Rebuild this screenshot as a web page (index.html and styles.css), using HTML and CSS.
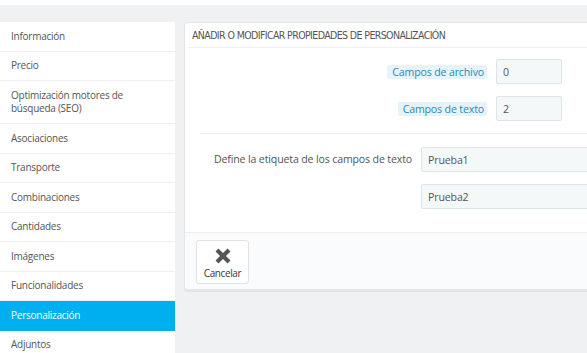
FILE: index.html
```html
<!DOCTYPE html>
<html lang="es">
<head>
  <meta charset="UTF-8">
  <meta name="viewport" content="width=device-width, initial-scale=1.0">
  <title>Personalización</title>
  <link rel="stylesheet" href="styles.css">
</head>
<body>
  <div class="topbar"></div>
  <div class="page">
    <nav class="tabs">
      <a class="tab">Información</a>
      <a class="tab">Precio</a>
      <a class="tab">Optimización motores de búsqueda (SEO)</a>
      <a class="tab">Asociaciones</a>
      <a class="tab">Transporte</a>
      <a class="tab">Combinaciones</a>
      <a class="tab">Cantidades</a>
      <a class="tab">Imágenes</a>
      <a class="tab">Funcionalidades</a>
      <a class="tab active">Personalización</a>
      <a class="tab">Adjuntos</a>
    </nav>

    <section class="panel">
      <h3 class="panel-heading">Añadir o modificar propiedades de personalización</h3>

      <div class="form-group">
        <div class="label-col"><span class="label-tip">Campos de archivo</span></div>
        <input class="field small" type="text" value="0">
      </div>
      <div class="form-group">
        <div class="label-col"><span class="label-tip">Campos de texto</span></div>
        <input class="field small" type="text" value="2">
      </div>

      <hr class="sep">

      <div class="form-group labels">
        <div class="label-col wide">Define la etiqueta de los campos de texto</div>
        <div class="stack">
          <input class="field" type="text" value="Prueba1">
          <input class="field" type="text" value="Prueba2">
        </div>
      </div>

      <div class="panel-footer">
        <button class="btn-cancel" type="button">
          <svg width="16" height="16" viewBox="0 0 16 16">
            <path d="M2 2 L14 14 M14 2 L2 14" stroke="#555" stroke-width="4.2" stroke-linecap="butt"/>
          </svg>
          <span>Cancelar</span>
        </button>
      </div>
    </section>
  </div>
</body>
</html>
```

FILE: styles.css
```css
* {
  margin: 0;
  padding: 0;
  box-sizing: border-box;
}

body {
  font-family: "Open Sans", "DejaVu Sans", sans-serif;
  font-size: 10.6px;
  letter-spacing: -0.15px;
  color: #555;
  background-color: #eff1f2;
  width: 587px;
  height: 353px;
  overflow: hidden;
}

.topbar {
  height: 5px;
  background-color: #fff;
}

.page {
  display: flex;
  align-items: flex-start;
  gap: 9px;
  padding-top: 17px;
}

/* left tabs */
.tabs {
  width: 175px;
  flex-shrink: 0;
  display: flex;
  flex-direction: column;
  background-color: #fff;
}

.tab {
  display: block;
  padding: 7.5px 11px;
  font-size: 10px;
  letter-spacing: -0.25px;
  line-height: 13.5px;
  border-bottom: 1px solid #eee;
  color: #555;
}

.tab.active {
  background-color: #00aff0;
  color: #fff;
  border-bottom-color: #00aff0;
}

/* main panel */
.panel {
  width: 520px;
  flex-shrink: 0;
  background-color: #fff;
  border: 1px solid #e6e6e6;
  border-radius: 4px;
  box-shadow: 0 2px 0 rgba(0, 0, 0, 0.05);
}

.panel-heading {
  margin: 0 3px;
  padding: 0 4px;
  height: 25px;
  line-height: 25px;
  border-bottom: 1px solid #eee;
  font-family: "DejaVu Sans Condensed", "DejaVu Sans", sans-serif;
  font-stretch: condensed;
  font-size: 10.5px;
  font-weight: normal;
  text-transform: uppercase;
  color: #555;
  letter-spacing: -0.6px;
}

.form-group {
  display: flex;
  align-items: center;
  gap: 9px;
  margin-top: 11px;
}

.form-group + .form-group {
  margin-top: 12px;
}

.label-col {
  width: 302px;
  text-align: right;
}

.label-tip {
  display: inline-block;
  padding: 0 3px 0 5px;
  line-height: 14px;
  background-color: #e6f4fa;
  color: #2a87b8;
  border-radius: 2px;
}

.field {
  height: 25px;
  width: 200px;
  padding: 0 6px;
  font-family: "Open Sans", sans-serif;
  font-size: 10.6px;
  letter-spacing: -0.15px;
  color: #555;
  background-color: #f5f8f9;
  border: 1px solid #dbe6e9;
  border-radius: 2px;
}

.field.small {
  width: 66px;
}

.sep {
  border: none;
  border-top: 1px solid #eee;
  margin: 12px 0 0 15px;
}

.form-group.labels {
  margin-top: 13px;
  align-items: flex-start;
}

.label-col.wide {
  width: 227px;
  line-height: 25px;
  color: #555;
}

.stack {
  display: flex;
  flex-direction: column;
  gap: 12px;
}

.panel-footer {
  margin-top: 23px;
  padding: 7px 11px 5px;
  background-color: #fafbfc;
  border-top: 1px solid #eee;
  border-radius: 0 0 4px 4px;
}

.btn-cancel {
  width: 53px;
  height: 44px;
  display: flex;
  flex-direction: column;
  align-items: center;
  justify-content: center;
  gap: 2px;
  background-color: #fff;
  border: 1px solid #e2e2e2;
  border-radius: 3px;
  font-family: "Open Sans", sans-serif;
  font-size: 10px;
  letter-spacing: -0.4px;
  color: #363a41;
  padding-top: 4px;
}

.btn-cancel svg {
  display: block;
}
```
